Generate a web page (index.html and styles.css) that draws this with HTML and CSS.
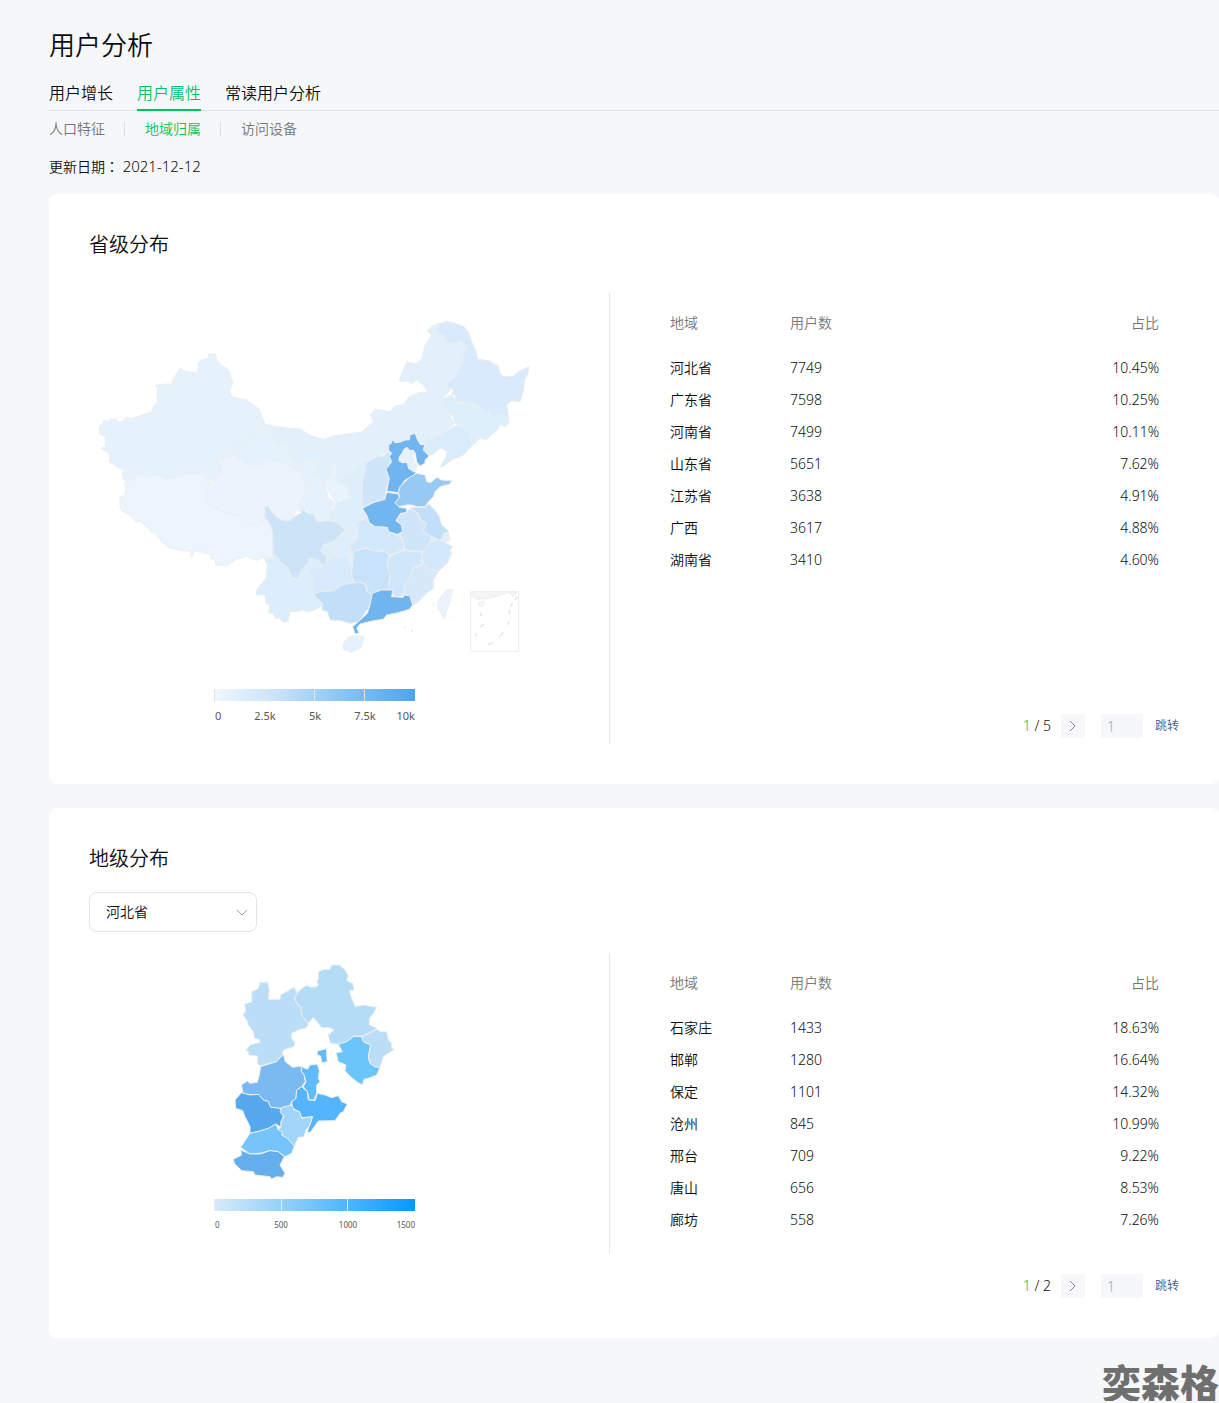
FILE: index.html
```html
<!DOCTYPE html>
<html lang="zh-CN">
<head>
    <meta charset="UTF-8">
    <meta name="viewport" content="width=device-width, initial-scale=1.0">
    <title>用户分析</title>
    <link rel="stylesheet" href="styles.css">
</head>
<body>
    <header>
        <h1>用户分析</h1>
        <nav class="tabs">
            <a href="#">用户增长</a>
            <a href="#" class="active">用户属性</a>
            <a href="#">常读用户分析</a>
        </nav>
        <nav class="sub-tabs">
            <a href="#">人口特征</a>
            <a href="#" class="active">地域归属</a>
            <a href="#">访问设备</a>
        </nav>
        <p class="update-date">更新日期<span class="colon" lang="zh-TW">：</span> <time>2021-12-12</time></p>
    </header>

    <main>
        <section class="card">
            <h2>省级分布</h2>
            <div class="card-body">
                <div class="chart province-chart">
                    <svg class="map" viewBox="-3 -51 1350 1161" role="img" aria-label="省级分布地图">
                        <!-- base under the inland provinces, so no gaps show -->
                        <path fill="#deeefb" d="M715 605 850 600 1000 620 1045 700 960 830 850 845 680 855 600 790 640 650Z"/>

                        <!-- north and west -->
                        <path fill="#e2f0fb" d="M548 348 590 354 630 356 660 376 700 388 730 378 785 370 815 366 850 335 842 315 855 297 870 300 900 305 915 288 940 285 955 262 985 248 1014 246 1000 225 980 210 965 220 950 212 932 215 928 208 950 155 975 162 998 145 1003 110 1025 75 1012 65 1025 48 1045 42 1075 60 1130 115 1118 160 1100 220 1055 268 1070 305 1095 340 1065 365 1040 380 1022 392 1010 378 1005 400 985 430 900 425 860 440 825 457 800 470 785 485 765 530 725 545 685 505 665 490 682 455 650 455 628 470 588 435 600 425 598 402 562 408 550 388Z"/>
                        <path fill="#e5f2fb" d="M28 350 38 342 42 332 52 334 64 326 70 330 80 326 82 336 96 336 108 322 124 326 150 317 185 307 190 290 202 278 202 236 196 226 220 223 235 222 246 227 248 210 270 175 284 183 310 188 324 186 326 158 334 150 352 147 358 131 377 133 379 147 392 165 410 175 420 188 422 202 430 215 418 245 424 258 440 264 470 270 490 284 508 298 516 322 526 343 518 366 490 374 468 384 464 395 442 396 440 412 430 436 380 446 384 462 394 468 392 488 384 490 380 508 354 510 340 494 290 492 270 500 228 507 200 495 180 500 150 492 136 505 110 513 98 505 98 478 80 470 58 455 60 435 50 425 34 415 46 410 46 380 28 372Z"/>
                        <path fill="#ecf4fd" d="M110 513 136 505 150 492 180 500 200 495 228 507 270 500 290 492 340 494 354 510 358 516 350 540 350 575 370 592 410 607 460 622 480 643 500 648 520 635 524 622 538 640 548 665 548 745 522 742 514 742 500 752 468 739 440 747 410 767 378 765 376 750 363 745 363 735 322 722 312 726 304 742 302 724 270 720 238 713 215 695 200 677 200 670 185 668 165 645 150 632 138 636 120 615 96 602 90 590 90 558 104 559 108 535 102 520Z"/>
                        <path fill="#e6f2fb" d="M526 343 548 348 550 388 562 408 598 402 600 425 588 435 610 455 628 470 650 455 682 455 672 475 665 490 690 505 705 530 715 560 735 580 720 610 715 635 685 637 672 612 655 605 640 597 632 605 625 588 635 570 648 545 642 515 630 487 600 470 570 452 550 455 530 446 515 472 480 463 460 450 430 436 440 412 442 396 464 395 468 384 490 374 518 366Z"/>
                        <path fill="#ebf3fd" d="M380 446 430 436 460 450 480 463 515 472 530 446 550 455 570 452 600 470 630 487 642 515 648 545 635 570 625 588 632 605 620 600 612 615 600 632 575 630 560 622 545 605 535 588 524 590 520 600 524 622 520 635 500 648 480 643 460 622 410 607 370 592 350 575 350 540 358 516 380 508 384 490 392 488 394 468 384 462Z"/>
                        <path fill="#deeefb" d="M825 457 800 470 785 485 750 510 755 525 778 535 775 565 755 570 738 582 730 600 715 605 715 630 750 640 780 660 805 670 800 635 825 625 815 595 818 550 818 510 825 485Z"/>
                        <path fill="#e8f3fc" d="M722 465 740 457 740 485 735 505 750 520 775 530 775 550 765 570 750 565 740 580 722 555 715 540 705 525 700 510 720 500Z"/>
                        <path fill="#cfe5f9" d="M825 460 842 450 860 440 880 438 900 425 902 455 895 470 888 480 897 505 888 540 885 568 845 578 818 592 815 575 818 510 825 485Z"/>

                        <!-- north-east -->
                        <path fill="#d8eafb" d="M1045 42 1070 34 1095 40 1120 48 1135 65 1145 95 1157 120 1163 148 1200 153 1212 162 1225 168 1230 190 1240 200 1270 198 1290 182 1317 170 1312 195 1305 205 1300 245 1290 275 1265 272 1250 285 1257 325 1235 312 1208 325 1195 303 1187 310 1175 295 1160 282 1130 278 1100 275 1095 255 1085 255 1090 240 1068 228 1100 195 1118 160 1118 140 1130 115 1112 92 1095 102 1070 100 1062 75 1038 65Z"/>
                        <path fill="#deeffc" d="M1055 268 1085 255 1100 275 1160 282 1175 295 1187 310 1195 303 1208 325 1235 312 1257 325 1255 340 1247 350 1230 345 1222 360 1200 378 1190 390 1170 385 1150 405 1138 370 1110 345 1095 340 1090 320 1070 305 1062 285Z"/>
                        <path fill="#d9ecfb" d="M1005 395 1010 378 1022 392 1040 380 1065 365 1100 345 1115 350 1138 370 1148 405 1120 435 1085 450 1055 473 1052 468 1068 440 1072 425 1055 415 1045 418 1030 432 1017 438 1000 420 1004 405Z"/>

                        <!-- Hebei, Shandong, Henan -->
                        <path fill="#70b5f0" d="M896 405 904 400 908 386 914 398 932 396 945 390 958 390 960 375 975 370 982 388 990 403 1004 405 1000 420 1017 438 1005 450 1005 460 990 468 980 455 976 430 965 428 950 412 928 440 928 455 952 458 956 476 976 486 976 495 945 510 928 535 925 548 890 543 898 505 888 478 905 455 898 440 905 430 896 420Z"/>
                        <path fill="#e5f2fc" d="M950 412 960 422 970 420 976 430 968 440 975 455 982 462 978 478 972 486 958 476 952 458 935 458 926 448 935 435 940 420ZM959 442 963 450"/>
                        <path fill="#96c9f3" d="M980 490 1005 495 1010 515 1022 518 1040 502 1055 510 1085 512 1080 522 1050 530 1035 545 1030 560 1015 575 1005 590 980 590 965 585 950 585 925 590 915 578 930 560 925 550 930 530 955 505Z"/>
                        <path fill="#72b6f0" d="M890 547 925 552 928 562 915 578 928 592 950 595 950 608 932 610 918 632 935 645 938 665 922 673 895 665 892 652 855 650 838 638 830 615 817 595 850 578 885 568Z"/>

                        <!-- east and centre -->
                        <path fill="#c1dff8" d="M960 592 1005 592 1015 582 1030 595 1048 618 1055 645 1075 663 1065 675 1060 690 1045 688 1015 675 1000 660 1010 640 990 630 985 610Z"/>
                        <path fill="#dfeefb" d="M1060 670 1075 666 1080 690 1065 697 1055 688Z"/>
                        <path fill="#cfe5f9" d="M935 610 950 608 960 595 985 610 990 630 1010 642 1000 660 1015 675 1025 682 1017 700 1020 712 1005 722 985 725 945 718 940 690 930 675 938 665 935 645 918 632Z"/>
                        <path fill="#d3e8fa" d="M800 635 825 628 838 640 855 650 892 653 895 665 922 675 935 690 940 700 942 718 900 735 880 722 850 722 830 712 800 720 785 727 780 710 770 700 800 690 805 670Z"/>
                        <path fill="#cce3f8" d="M524 590 535 588 545 605 560 622 575 630 600 632 612 620 632 610 640 597 650 608 672 612 680 635 715 632 740 637 765 660 745 680 730 695 700 705 692 725 710 735 712 762 690 765 665 745 655 760 635 780 625 805 608 805 590 770 570 755 560 735 550 745 548 665 538 640 524 622Z"/>
                        <path fill="#deeefb" d="M765 660 745 680 730 695 700 705 692 725 710 735 710 758 730 742 770 740 775 752 785 755 785 727 775 710 800 690 805 680 790 665Z"/>
                        <path fill="#dceefb" d="M550 745 560 735 570 755 590 770 608 805 625 805 635 780 655 760 655 748 665 745 690 752 695 768 655 782 668 805 665 830 675 850 705 865 705 890 690 890 675 900 650 905 640 900 620 905 600 905 595 935 580 937 568 925 555 925 550 910 535 908 540 885 528 880 525 855 500 855 500 840 528 805 532 765 524 745Z"/>
                        <path fill="#d8eafb" d="M650 780 690 770 712 758 730 742 770 740 785 765 785 785 790 810 775 825 760 825 730 840 690 845 672 850 665 830 668 805 655 795Z"/>
                        <path fill="#c1dff8" d="M670 850 695 845 730 842 755 825 790 818 810 815 825 825 832 845 847 850 845 870 835 895 820 915 805 935 780 940 750 932 720 930 712 905 695 900 698 880 680 865Z"/>
                        <path fill="#c7e2f9" d="M790 725 825 715 850 722 885 725 898 735 890 765 900 790 895 838 875 840 855 845 847 855 832 845 830 825 810 815 795 820 785 795 788 760Z"/>
                        <path fill="#d0e6fa" d="M898 740 940 722 985 725 995 735 995 760 970 775 960 800 945 825 940 855 920 860 905 850 895 838 900 790 890 765Z"/>
                        <path fill="#d3e8fb" d="M1005 720 1020 695 1050 688 1060 695 1075 702 1088 710 1080 720 1085 730 1075 755 1060 770 1045 785 1025 778 1000 765 995 735Z"/>
                        <path fill="#d6e9fb" d="M1000 765 1025 778 1045 785 1030 810 1030 835 1010 850 985 875 968 888 965 865 945 855 940 850 945 825 960 800 970 775Z"/>
                        <path fill="#70b5f0" d="M847 850 875 840 908 840 905 860 940 862 942 855 960 858 968 885 958 898 925 908 890 915 880 928 850 932 810 942 800 955 808 968 795 972 788 950 805 935 832 910 840 885Z"/>
                        <path fill="#e5f1fc" d="M775 982 790 978 820 978 820 995 810 1015 785 1027 760 1018 760 1000Z"/>
                        <path fill="#ebf4fc" d="M1070 840 1087 838 1080 875 1070 900 1063 925 1043 895 1045 870Z"/>
                        <path fill="#eee" d="M943 950h4v3h-4zM964 960h4v4h-4zM1031 882h3v3h-3zM1080 921h2v2h-2z"/>

                        <!-- South China Sea inset -->
                        <path fill="none" d="M1142 845h144v179h-144z"/>
                        <path fill="#f5f5f5" d="M1142 850 1150 845 1262 845 1240 852 1200 865 1165 868 1150 862ZM1255 847 1270 859 1280 846ZM1166 877 1184 874 1178 888 1168 890Z"/>
                        <path class="dash" d="m1170 907 5 12M1182 942l-12 10M1156 970l5 10M1193 1004l16-6M1228 981l12-14M1252 944l6-10M1258 912v-13M1260 890l8-10M1275 870l8-10"/>
                    </svg>
                    <svg class="legend" viewBox="0 0 206 40" width="206" height="40">
                        <defs>
                            <linearGradient id="province-scale">
                                <stop offset="0" stop-color="#edf7ff"/>
                                <stop offset="0.3" stop-color="#cce4f9"/>
                                <stop offset="0.6" stop-color="#90c8f4"/>
                                <stop offset="1" stop-color="#4da5ed"/>
                            </linearGradient>
                        </defs>
                        <rect width="201" height="12" fill="url(#province-scale)"/>
                        <path d="M0 0h1v12h-1zM50 0h1v12h-1zM100 0h1v12h-1zM150 0h1v12h-1z" fill="#e2e2e2"/>
                        <g class="ticks">
                            <text x="1" y="31">0</text>
                            <text class="mid" x="51" y="31">2.5k</text>
                            <text class="mid" x="101" y="31">5k</text>
                            <text class="mid" x="151" y="31">7.5k</text>
                            <text class="end" x="201" y="31">10k</text>
                        </g>
                    </svg>
                </div>
                <div class="data">
                    <table>
                        <thead>
                            <tr><th>地域</th><th>用户数</th><th>占比</th></tr>
                        </thead>
                        <tbody>
                            <tr><td>河北省</td><td>7749</td><td>10.45%</td></tr>
                            <tr><td>广东省</td><td>7598</td><td>10.25%</td></tr>
                            <tr><td>河南省</td><td>7499</td><td>10.11%</td></tr>
                            <tr><td>山东省</td><td>5651</td><td>7.62%</td></tr>
                            <tr><td>江苏省</td><td>3638</td><td>4.91%</td></tr>
                            <tr><td>广西</td><td>3617</td><td>4.88%</td></tr>
                            <tr><td>湖南省</td><td>3410</td><td>4.60%</td></tr>
                        </tbody>
                    </table>
                    <div class="pager">
                        <span><b>1</b> / 5</span>
                        <button type="button" aria-label="下一页"><svg viewBox="0 0 8 12" width="8" height="12"><path d="M1 1l5 5-5 5"/></svg></button>
                        <input type="text" placeholder="1" aria-label="页码">
                        <a href="#">跳转</a>
                    </div>
                </div>
            </div>
        </section>

        <section class="card">
            <h2>地级分布</h2>
            <div class="select-box">
                <select aria-label="省份">
                    <option selected>河北省</option>
                    <option>广东省</option>
                    <option>河南省</option>
                    <option>山东省</option>
                </select>
                <svg viewBox="0 0 12 8" width="12" height="8"><path d="M1 1l5 5 5-5"/></svg>
            </div>
            <div class="card-body">
                <div class="chart city-chart">
                    <svg class="map" viewBox="-333 9 1350 711" role="img" aria-label="河北省地级分布地图">
                        <path fill="#bbdef8" d="M180 95 190 98 203 95 208 120 205 148 240 148 242 135 262 123 282 112 292 130 284 145 292 162 302 170 308 200 325 222 318 235 300 238 275 250 275 265 285 278 282 290 250 300 248 312 230 335 205 340 185 348 172 342 172 318 145 315 146 304 137 302 150 285 180 277 178 268 163 265 160 245 145 225 140 210 129 195 137 183 134 162 156 155 155 125 175 115Z"/>
                        <path fill="#b5dcf7" d="M292 130 305 115 320 106 335 112 350 110 357 103 350 98 355 85 355 65 372 58 390 58 395 45 418 45 435 60 445 78 440 90 450 98 458 98 462 120 448 122 455 145 466 170 490 165 530 172 520 190 508 205 508 225 530 235 515 245 490 258 460 258 440 275 415 283 390 278 385 255 402 240 388 233 365 233 340 202 325 220 308 200 302 170 292 162 284 145Z"/>
                        <path fill="#6ac5fb" d="M415 283 440 275 460 260 490 260 490 275 512 285 505 320 510 340 525 350 540 352 530 375 510 383 492 388 487 405 470 395 452 380 435 362 438 345 415 335 408 308 427 305Z"/>
                        <path fill="#bbdef7" d="M530 238 542 245 560 245 565 270 575 280 575 295 583 298 565 310 550 320 540 352 525 350 510 340 505 320 512 285 490 275 485 262Z"/>
                        <path fill="#62bbf9" d="M352 303 365 300 380 296 380 318 382 335 365 338 362 318 352 315ZM305 350 322 358 330 345 352 343 358 362 355 385 360 395 350 405 350 430 342 450 328 450 322 425 310 410 318 395 312 375 303 362Z"/>
                        <path fill="#7abaf0" d="M250 312 256 335 278 352 305 348 303 362 312 375 316 395 305 410 290 420 288 445 275 455 270 468 240 475 210 472 205 455 190 450 175 435 130 432 124 405 142 393 150 400 172 397 178 375 182 350 230 335Z"/>
                        <path fill="#57a9ee" d="M124 428 150 435 175 433 190 450 205 455 212 472 240 475 246 490 250 500 243 515 243 532 228 522 205 535 180 543 150 550 150 530 135 500 128 482 107 475 105 450Z"/>
                        <path fill="#54b5fc" d="M305 410 322 425 325 450 345 452 352 430 375 435 395 443 415 437 425 455 442 462 430 485 420 490 405 512 355 513 330 548 322 545 338 500 305 503 298 485 278 475 275 455 288 445 290 420Z"/>
                        <path fill="#a2d5fa" d="M246 472 275 465 283 480 298 485 305 505 336 500 330 525 318 540 312 560 295 562 283 588 260 565 245 555 247 545 232 542 243 530 243 515 252 500 240 485Z"/>
                        <path fill="#75c5fc" d="M228 522 235 540 247 545 245 555 262 565 283 588 275 610 255 620 235 605 210 602 180 610 150 612 122 592 140 565 150 550 180 543 205 535Z"/>
                        <path fill="#64aeec" d="M122 600 150 612 180 612 210 602 235 605 253 620 240 645 255 670 248 682 230 680 215 687 210 680 165 675 160 665 125 662 103 640 100 628 125 615Z"/>
                    </svg>
                    <svg class="legend small" viewBox="0 0 206 40" width="206" height="40">
                        <defs>
                            <linearGradient id="city-scale">
                                <stop offset="0" stop-color="#d9eaf7"/>
                                <stop offset="0.45" stop-color="#7cc8fd"/>
                                <stop offset="1" stop-color="#0598ff"/>
                            </linearGradient>
                        </defs>
                        <rect width="201" height="12" fill="url(#city-scale)"/>
                        <path d="M0 0h1v12h-1zM67 0h1v12h-1zM133 0h1v12h-1z" fill="#e2eaf0"/>
                        <g class="ticks">
                            <text x="1" y="29">0</text>
                            <text class="mid" x="67" y="29">500</text>
                            <text class="mid" x="134" y="29">1000</text>
                            <text class="end" x="201" y="29">1500</text>
                        </g>
                    </svg>
                </div>
                <div class="data">
                    <table>
                        <thead>
                            <tr><th>地域</th><th>用户数</th><th>占比</th></tr>
                        </thead>
                        <tbody>
                            <tr><td>石家庄</td><td>1433</td><td>18.63%</td></tr>
                            <tr><td>邯郸</td><td>1280</td><td>16.64%</td></tr>
                            <tr><td>保定</td><td>1101</td><td>14.32%</td></tr>
                            <tr><td>沧州</td><td>845</td><td>10.99%</td></tr>
                            <tr><td>邢台</td><td>709</td><td>9.22%</td></tr>
                            <tr><td>唐山</td><td>656</td><td>8.53%</td></tr>
                            <tr><td>廊坊</td><td>558</td><td>7.26%</td></tr>
                        </tbody>
                    </table>
                    <div class="pager">
                        <span><b>1</b> / 2</span>
                        <button type="button" aria-label="下一页"><svg viewBox="0 0 8 12" width="8" height="12"><path d="M1 1l5 5-5 5"/></svg></button>
                        <input type="text" placeholder="1" aria-label="页码">
                        <a href="#">跳转</a>
                    </div>
                </div>
            </div>
        </section>
    </main>

    <footer>奕森格</footer>
</body>
</html>
```
FILE: styles.css
```css
* {
    box-sizing: border-box;
}
body {
    margin: 0;
    padding: 27px 0 0 49px;
    background-color: #f6f7f9;
    color: #0c0d0e;
    font-family: "Noto Sans", "Noto Sans CJK SC", sans-serif;
    font-size: 14px;
    font-weight: 350;
    line-height: 20px;
}
a {
    color: inherit;
    text-decoration: none;
}
h1 {
    margin: 0;
    font-size: 26px;
    font-weight: 350;
    line-height: 36px;
}
.tabs {
    display: flex;
    gap: 24px;
    margin-top: 14px;
    border-bottom: 1px solid #e0e2e4;
    font-size: 16px;
    line-height: 32px;
}
.tabs a {
    height: 34px;
    margin-bottom: -1px;
}
.tabs .active {
    border-bottom: 2px solid #07c160;
}
.active {
    color: #07c160;
}
.sub-tabs {
    display: flex;
    margin-top: 11px;
    color: #757677;
    line-height: 14px;
}
.sub-tabs a + a {
    margin-left: 19px;
    padding-left: 20px;
    border-left: 1px solid #dcdee0;
}
.update-date {
    margin: 20px 0 17px;
}
.update-date time {
    font-size: 15px;
}
.colon {
    font-family: "Noto Sans CJK TC", sans-serif;
    line-height: 14px;
}

/* cards */
.card {
    margin-bottom: 24px;
    padding: 37px 40px 40px;
    border-radius: 8px;
    background-color: #fff;
}
.card h2 {
    margin: 0;
    font-size: 20px;
    font-weight: 350;
    line-height: 28px;
}
.card-body {
    display: flex;
    align-items: flex-start;
    margin-top: 34px;
}
.select-box + .card-body {
    margin-top: 21px;
}
.chart {
    flex: 0 0 521px;
    padding-bottom: 15px;
    border-right: 1px solid #e4e6e8;
}
.map {
    display: block;
    width: 450px;
    stroke: #eceeef;
    stroke-width: 3;
    stroke-linejoin: round;
}
.dash {
    fill: none;
    stroke: #e8e8e8;
    stroke-width: 5;
}
.legend {
    display: block;
    margin: 9px 0 0 125px;
}
.ticks {
    fill: #555;
    font-size: 11px;
    font-weight: 400;
}
.small .ticks {
    font-size: 8px;
}
.mid {
    text-anchor: middle;
}
.end {
    text-anchor: end;
}

/* table and pager */
.data {
    flex: 1;
    display: flex;
    flex-direction: column;
    align-self: stretch;
    padding-left: 60px;
}
table {
    margin-right: 20px;
    border-collapse: collapse;
    table-layout: fixed;
}
th, td {
    height: 32px;
    padding: 0;
    font-weight: 350;
    text-align: left;
}
th {
    height: 59px;
    color: #757677;
}
th:first-child {
    width: 120px;
}
th:last-child, td:last-child {
    text-align: right;
}
.pager {
    display: flex;
    align-items: center;
    justify-content: flex-end;
    margin-top: auto;
    padding: 38px 0 6px;
}
.select-box + .card-body .pager {
    padding-bottom: 0;
}
.pager b {
    color: #07c160;
    font-weight: 350;
}
.pager button {
    display: flex;
    align-items: center;
    justify-content: center;
    width: 24px;
    height: 24px;
    margin: 0 16px 0 10px;
    padding: 0;
    border: 0;
    border-radius: 2px;
    background-color: #f6f7f9;
}
.pager path {
    fill: none;
    stroke: #7f8081;
}
.pager input {
    width: 42px;
    height: 24px;
    padding: 0 6px;
    border: 0;
    border-radius: 2px;
    background-color: #f6f7f9;
    font: inherit;
}
.pager input::placeholder {
    color: #a8aaac;
}
.pager a {
    margin-left: 12px;
    color: #435a8a;
    font-size: 12px;
}

/* province select */
.select-box {
    position: relative;
    width: 168px;
    margin-top: 19px;
}
.select-box select {
    display: block;
    width: 100%;
    height: 40px;
    padding: 0 16px;
    border: 1px solid #e0e3e6;
    border-radius: 8px;
    appearance: none;
    background-color: #fff;
    color: inherit;
    font: inherit;
}
.select-box svg {
    position: absolute;
    top: 17px;
    right: 9px;
    fill: none;
    stroke: #a0a2a4;
    pointer-events: none;
}

footer {
    margin-top: 27px;
    color: #6f6f6f;
    font-size: 39px;
    font-weight: 900;
    line-height: 36px;
    text-align: right;
}
```
